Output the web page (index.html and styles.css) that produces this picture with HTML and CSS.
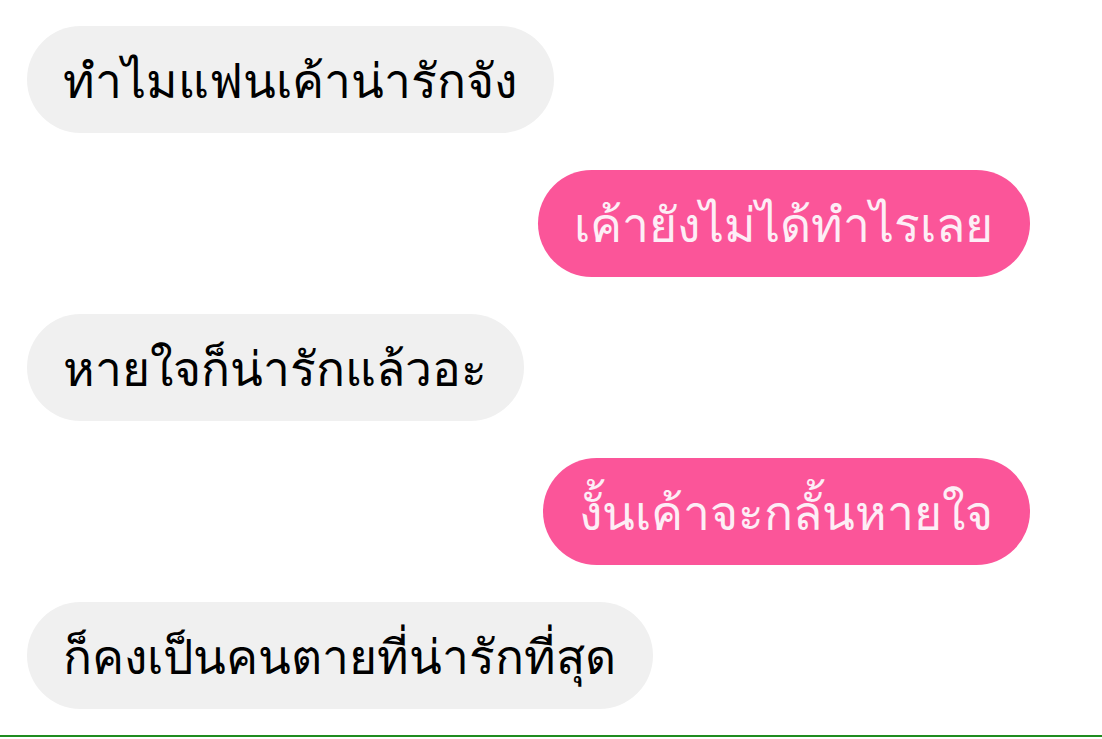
FILE: index.html
```html
<!DOCTYPE html>
<html lang="th">
<head>
<meta charset="utf-8">
<link rel="stylesheet" href="styles.css">
</head>
<body>
<div class="chat">
  <div class="bubble in">ทำไมแฟนเค้าน่ารักจัง</div>
  <div class="bubble out">เค้ายังไม่ได้ทำไรเลย</div>
  <div class="bubble in">หาย ใจก็น่ารักแล้วอะ</div>
  <div class="bubble out">งั้นเค้าจะกลั้นหาย ใจ</div>
  <div class="bubble in">ก็คงเป็นคนตายที่น่ารักที่สุด</div>
</div>
<div class="bar"></div>
</body>
</html>
```
FILE: styles.css
```css
html, body {
  margin: 0;
  padding: 0;
  background: #ffffff;
  width: 1102px;
  height: 739px;
  overflow: hidden;
}
.chat {
  display: flex;
  flex-direction: column;
  gap: 37px;
  padding: 26px 72px 0 27px;
  height: 709px;
  box-sizing: border-box;
}
.bubble {
  height: 107px;
  line-height: 107px;
  padding: 0 37px 0 36px;
  border-radius: 54px;
  font-family: "Noto Sans", "DejaVu Sans", sans-serif;
  font-size: 48px;
  word-spacing: -12px;
  white-space: nowrap;
  box-sizing: border-box;
}
.in {
  align-self: flex-start;
  background: #f0f0f0;
  color: #000000;
}
.out {
  align-self: flex-end;
  background: #fb5599;
  color: #fdeef6;
}
.bar {
  height: 2px;
  margin-top: 26px;
  background: #1f8c1f;
}
```
